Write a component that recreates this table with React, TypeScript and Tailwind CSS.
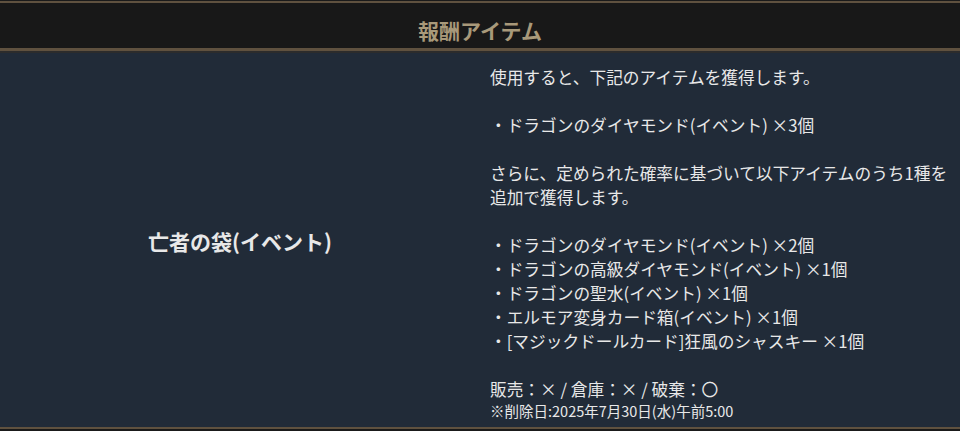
import React from "react";

const font = { fontFamily: '"Noto Sans CJK JP", "Noto Sans", sans-serif' };

const Blank = () => <div className="h-6" />;

export default function App() {
  return (
    <div className="w-[960px] h-[431px] bg-[#1a1a1a] pt-px overflow-hidden" style={font}>
      <div className="border-t-2 border-[#5f513f]">
        <div className="h-[48px] bg-[#181818] flex items-center justify-center border-b-[3px] border-[#5f513f]">
          <h2 className="text-[21px] font-bold text-[#a8997a] leading-none pt-[9px]">報酬アイテム</h2>
        </div>
        <div className="h-[2px] bg-[#2c2c2c]" />
        <div className="flex bg-[#212b38] text-[#e8e8e8] border-b-2 border-[#5f513f]">
          <div className="w-[480px] flex items-center justify-center pt-1">
            <span className="text-[21px] font-bold">亡者の袋(イベント)</span>
          </div>
          <div className="w-[480px] pl-2.5 pr-3 pt-3 pb-[6px] text-[16.7px] leading-6">
            <div>使用すると、下記のアイテムを獲得します。</div>
            <Blank />
            <div>・ドラゴンのダイヤモンド(イベント) ×3個</div>
            <Blank />
            <div>さらに、定められた確率に基づいて以下アイテムのうち1種を追加で獲得します。</div>
            <Blank />
            <div>・ドラゴンのダイヤモンド(イベント) ×2個</div>
            <div>・ドラゴンの高級ダイヤモンド(イベント) ×1個</div>
            <div>・ドラゴンの聖水(イベント) ×1個</div>
            <div>・エルモア変身カード箱(イベント) ×1個</div>
            <div>・[マジックドールカード]狂風のシャスキー ×1個</div>
            <Blank />
            <div>販売：× / 倉庫：× / 破棄：〇</div>
            <div className="text-[14.5px] leading-5">※削除日:2025年7月30日(水)午前5:00</div>
          </div>
        </div>
      </div>
    </div>
  );
}
